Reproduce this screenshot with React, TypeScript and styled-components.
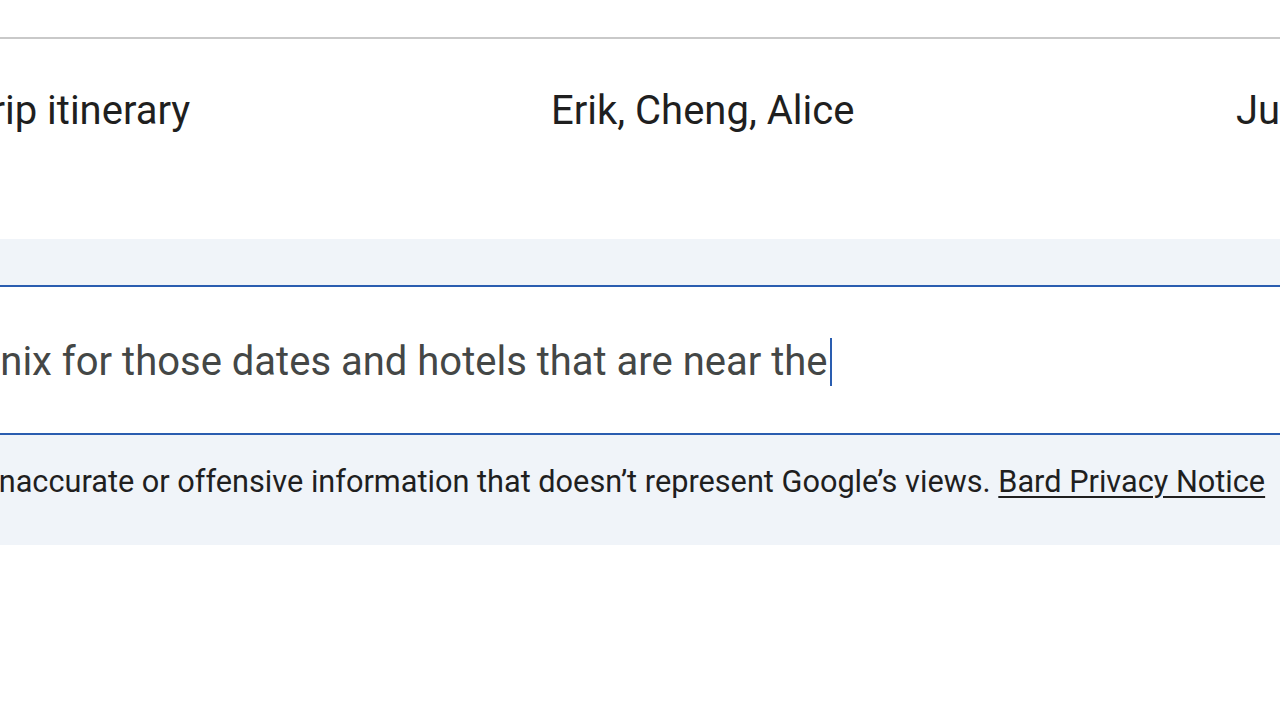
import React from "react";
import styled, { createGlobalStyle } from "styled-components";

const GlobalStyle = createGlobalStyle`
  html, body {
    margin: 0;
    padding: 0;
    background: #ffffff;
    overflow: hidden;
  }
  body {
    font-family: Roboto, "Noto Sans", Arial, sans-serif;
    width: 1280px;
    height: 720px;
  }
`;

const Page = styled.div`
  width: 1280px;
  height: 720px;
  overflow: hidden;
  display: flex;
  flex-direction: column;
`;

const TableTop = styled.div`
  height: 37px;
  border-bottom: 2px solid #c9c9c9;
`;

const TableRow = styled.div`
  display: grid;
  grid-template-columns: 551px 685px 1fr;
  height: 200px;
  padding-top: 52px;
  box-sizing: border-box;
  font-size: 40px;
  line-height: 40px;
  color: #1f1f1f;
  white-space: nowrap;
  overflow: hidden;
`;

const Cell = styled.div<{ $shift?: number }>`
  margin-left: ${(p) => p.$shift ?? 0}px;
`;

const Spacer = styled.div`
  height: 46px;
  background: #f0f4f9;
`;

const InputBox = styled.div`
  height: 146px;
  border-top: 2px solid #2a5db0;
  border-bottom: 2px solid #2a5db0;
  background: #ffffff;
  display: flex;
  align-items: center;
  overflow: hidden;
  white-space: nowrap;
`;

const Typed = styled.span<{ $shift: number }>`
  margin-left: ${(p) => p.$shift}px;
  padding-top: 4px;
  font-size: 40px;
  line-height: 48px;
  color: #444746;
  display: inline-flex;
  align-items: center;
`;

const Caret = styled.span`
  display: inline-block;
  width: 2px;
  height: 48px;
  margin-left: 2px;
  background: #2a5db0;
`;

const Footer = styled.div`
  height: 110px;
  padding-bottom: 18px;
  box-sizing: border-box;
  background: #f0f4f9;
  display: flex;
  align-items: center;
  overflow: hidden;
  white-space: nowrap;
  font-size: 30.7px;
  color: #1f1f1f;
`;

const Disclaimer = styled.span<{ $shift: number }>`
  margin-left: ${(p) => p.$shift}px;
`;

const NoticeLink = styled.a`
  color: #1f1f1f;
  text-decoration: underline;
  text-underline-offset: 4px;
  text-decoration-thickness: 2px;
`;

export default function App() {
  return (
    <Page>
      <GlobalStyle />
      <TableTop />
      <TableRow>
        <Cell $shift={-31}>Trip itinerary</Cell>
        <Cell>Erik, Cheng, Alice</Cell>
        <Cell>June 2023</Cell>
      </TableRow>
      <Spacer />
      <InputBox>
        <Typed $shift={-91}>
          Phoenix for those dates and hotels that are near the
          <Caret />
        </Typed>
      </InputBox>
      <Footer>
        <Disclaimer $shift={-249}>
          Bard may display inaccurate or offensive information that doesn’t represent Google’s views.{" "}
          <NoticeLink href="#">Bard Privacy Notice</NoticeLink>
        </Disclaimer>
      </Footer>
    </Page>
  );
}
